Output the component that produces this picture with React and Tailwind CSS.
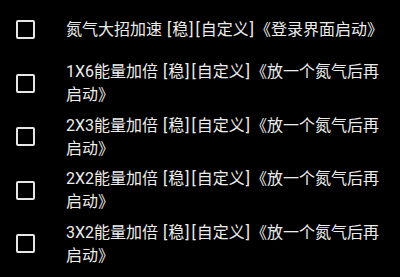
import React from "react";

const items = [
  ["氮气大招加速", "《登录界面启动》"],
  ["1X6能量加倍", "《放一个氮气后再启动》"],
  ["2X3能量加倍", "《放一个氮气后再启动》"],
  ["2X2能量加倍", "《放一个氮气后再启动》"],
  ["3X2能量加倍", "《放一个氮气后再启动》"],
];

function B({ children }) {
  return <span className="mx-[1px]">{children}</span>;
}

export default function App() {
  return (
    <div
      className="w-[400px] h-[277px] bg-black overflow-hidden pt-[3px]"
      style={{ fontFamily: 'Roboto, "Noto Sans CJK SC", sans-serif' }}
    >
      {items.map(([a, b], i) => (
        <div key={i} className="flex items-center h-[53.5px]">
          <div className="w-[66px] shrink-0 flex justify-start pl-[16px]">
            <div className="w-[19px] h-[19px] border-2 border-[#e6e6e6] rounded-[2px]" />
          </div>
          <div className="w-[324px] text-[16px] leading-[23px] text-[#ececec]">
            {a} <B>[</B>稳<B>]</B><B>[</B>自定义<B>]</B>{b}
          </div>
        </div>
      ))}
    </div>
  );
}
